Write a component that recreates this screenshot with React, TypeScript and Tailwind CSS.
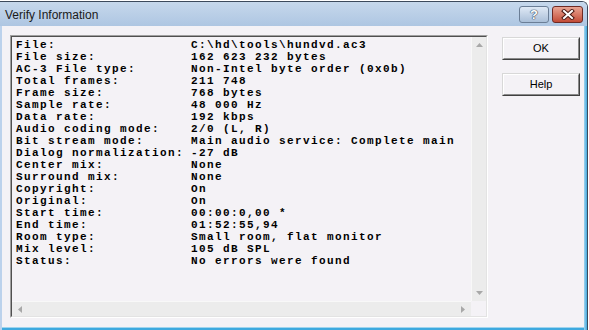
import React from "react";

const rows: [string, string][] = [
  ["File:", "C:\\hd\\tools\\hundvd.ac3"],
  ["File size:", "162 623 232 bytes"],
  ["AC-3 File type:", "Non-Intel byte order (0x0b)"],
  ["Total frames:", "211 748"],
  ["Frame size:", "768 bytes"],
  ["Sample rate:", "48 000 Hz"],
  ["Data rate:", "192 kbps"],
  ["Audio coding mode:", "2/0 (L, R)"],
  ["Bit stream mode:", "Main audio service: Complete main"],
  ["Dialog normalization:", "-27 dB"],
  ["Center mix:", "None"],
  ["Surround mix:", "None"],
  ["Copyright:", "On"],
  ["Original:", "On"],
  ["Start time:", "00:00:0,00 *"],
  ["End time:", "01:52:55,94"],
  ["Room type:", "Small room, flat monitor"],
  ["Mix level:", "105 dB SPL"],
  ["Status:", "No errors were found"],
];

function Btn({ label }: { label: string }) {
  return (
    <div className="w-[78px] h-[23px] border border-t-[#d8d8d8] border-l-[#d8d8d8] border-r-[#404040] border-b-[#404040] bg-[#f4f2f6]">
      <div className="w-full h-full border border-t-white border-l-white border-r-[#8a8a8a] border-b-[#8a8a8a] flex items-center justify-center text-[11px] text-black [font-family:'Liberation_Sans',Arial,sans-serif]">
        {label}
      </div>
    </div>
  );
}

export default function App() {
  return (
    <div className="w-[589px] h-[330px] bg-white overflow-hidden pt-[1px]">
      <div className="w-[588px] h-[329px] flex flex-col border-t border-r border-[#3c4a5c] rounded-tr-[6px] overflow-hidden">
        {/* title bar */}
        <div className="h-[24px] flex items-start bg-gradient-to-b from-[#c6d8ec] to-[#aec6e2]">
          <div className="pl-[5px] pt-[5px] text-[12px] leading-[16px] text-[#1a1a1a] [font-family:'Liberation_Sans',Arial,sans-serif]">
            Verify Information
          </div>
          <div className="ml-auto mr-[4px] mt-[4px] flex gap-[3px]">
            <div className="w-[30px] h-[17px] rounded-[3px] border border-[#6b7e96] bg-gradient-to-b from-[#dfe9f5] to-[#aabfd8] flex items-center justify-center">
              <span className="text-white text-[13px] font-bold leading-none [font-family:'Liberation_Sans',Arial,sans-serif] [text-shadow:0_0_1px_#33435a,0_0_1px_#33435a,0_0_1px_#33435a]">
                ?
              </span>
            </div>
            <div className="w-[31px] h-[17px] rounded-[3px] border border-[#6e2a24] bg-gradient-to-b from-[#e8a493] to-[#c24a36] flex items-center justify-center">
              <svg width="14" height="11" viewBox="0 0 14 11">
                <path d="M3 2 L11 9 M11 2 L3 9" stroke="#4a1a14" strokeWidth="4" strokeLinecap="square" />
                <path d="M3 2 L11 9 M11 2 L3 9" stroke="#ffffff" strokeWidth="2" strokeLinecap="square" />
              </svg>
            </div>
          </div>
        </div>
        {/* body */}
        <div className="flex-1 flex">
          <div className="w-[2px] bg-[#bcd2ec]" />
          <div className="flex-1 flex flex-col">
            <div className="flex-1 bg-[#f4f2f6] flex items-start pt-[9px] pl-[8px]">
              {/* text box */}
              <div className="w-[478px] h-[283px] border border-t-[#a0a0a0] border-l-[#a0a0a0] border-r-white border-b-white">
                <div className="w-full h-full border border-t-[#505050] border-l-[#505050] border-r-[#e3e3e3] border-b-[#e3e3e3] flex flex-col">
                  <div className="flex-1 flex">
                    <div className="flex-1 pt-[2px] pl-[4px] text-[11px] leading-[12px] font-bold tracking-[1.4px] text-black [font-family:'Liberation_Mono','Courier_New',monospace] whitespace-pre">
                      {rows.map(([k, v]) => (
                        <div key={k} className="grid grid-cols-[175px_1fr] h-[12px]">
                          <span>{k}</span>
                          <span>{v}</span>
                        </div>
                      ))}
                    </div>
                    {/* vertical scrollbar */}
                    <div className="w-[15px] bg-[#ececec] border-l border-[#f8f8f8] flex flex-col items-center justify-between py-[6px]">
                      <svg width="7" height="4" viewBox="0 0 7 4">
                        <path d="M0 4 L3.5 0 L7 4 Z" fill="#a8a8a8" />
                      </svg>
                      <svg width="7" height="4" viewBox="0 0 7 4">
                        <path d="M0 0 L7 0 L3.5 4 Z" fill="#a8a8a8" />
                      </svg>
                    </div>
                  </div>
                  {/* horizontal scrollbar */}
                  <div className="h-[15px] flex">
                    <div className="flex-1 bg-[#ececec] border-t border-[#f8f8f8] flex items-center justify-between px-[6px]">
                      <svg width="4" height="7" viewBox="0 0 4 7">
                        <path d="M4 0 L0 3.5 L4 7 Z" fill="#a8a8a8" />
                      </svg>
                      <svg width="4" height="7" viewBox="0 0 4 7">
                        <path d="M0 0 L4 3.5 L0 7 Z" fill="#a8a8a8" />
                      </svg>
                    </div>
                    <div className="w-[15px] bg-[#f4f2f6]" />
                  </div>
                </div>
              </div>
              {/* buttons */}
              <div className="ml-[14px] mt-[2px] flex flex-col gap-[13px]">
                <Btn label="OK" />
                <Btn label="Help" />
              </div>
            </div>
            <div className="h-[1px] bg-[#9fd4ee]" />
            <div className="h-[2px] bg-[#3ea9df]" />
          </div>
          <div className="w-[3px] bg-gradient-to-r from-[#9fd4ee] to-[#3ea9df]" />
        </div>
      </div>
    </div>
  );
}
